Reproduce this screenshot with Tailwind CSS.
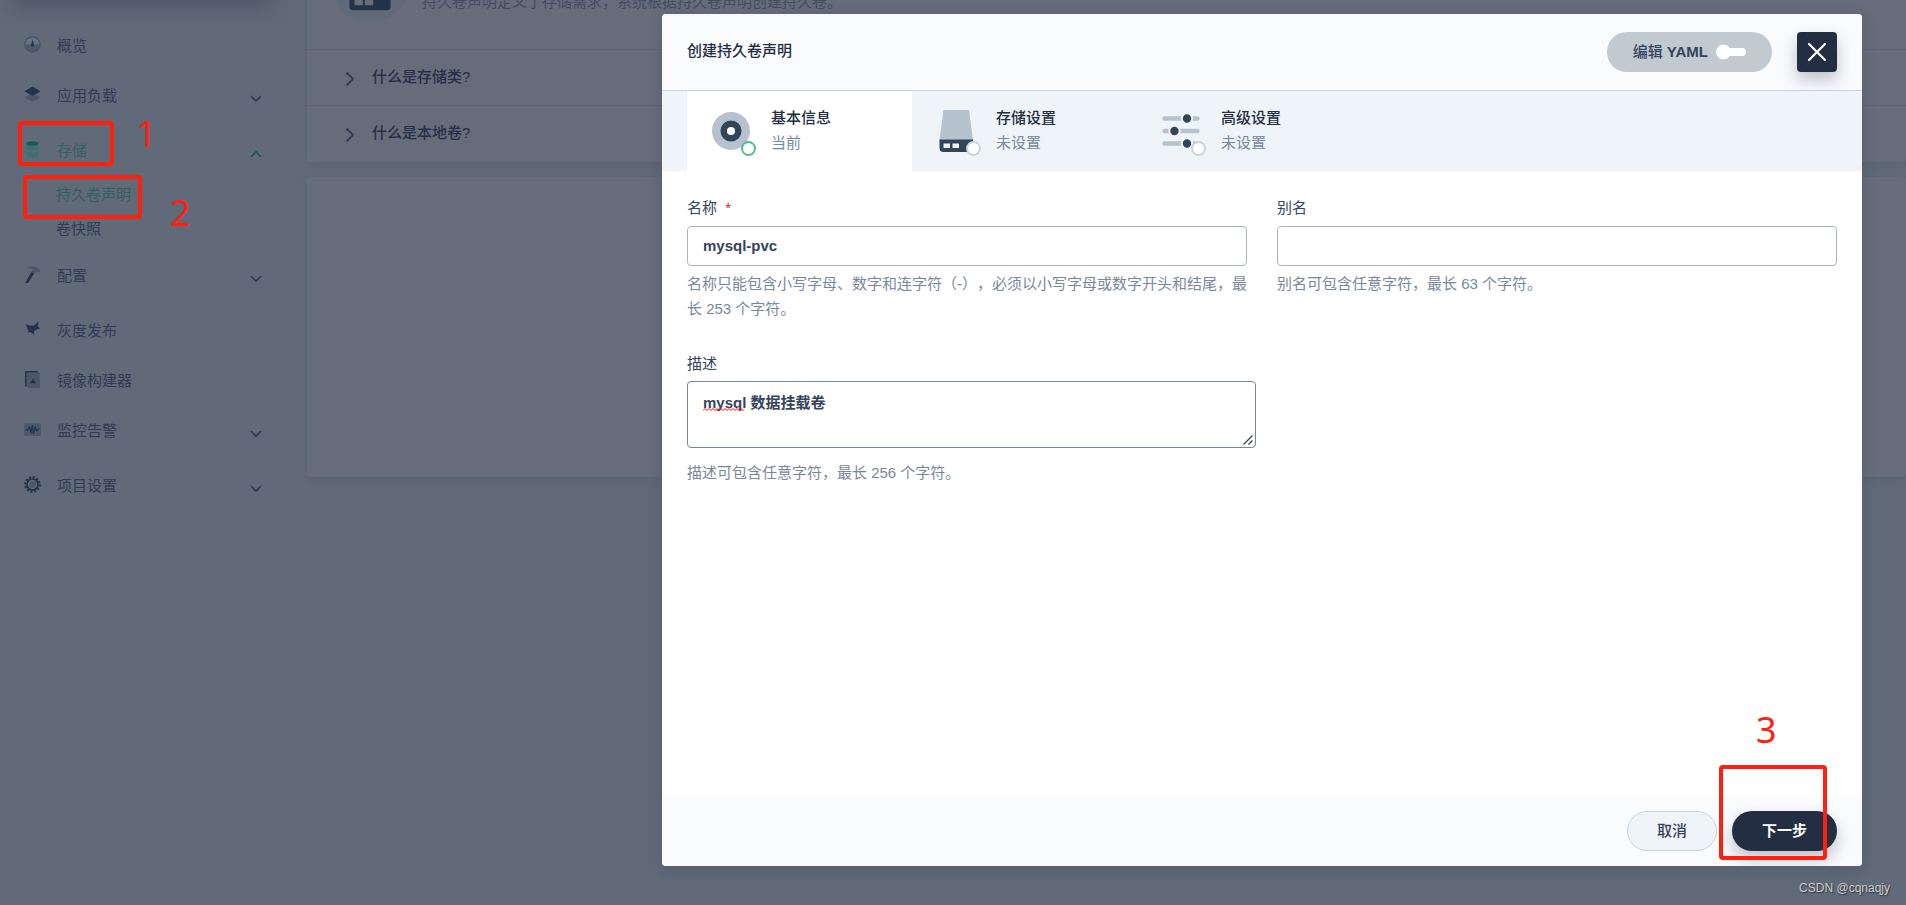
<!DOCTYPE html>
<html lang="zh-CN">
<head>
<meta charset="utf-8">
<title>创建持久卷声明</title>
<script src="https://cdn.jsdelivr.net/npm/@tailwindcss/browser@4"></script>
</head>
<body class="relative h-screen overflow-hidden bg-[#606a78] font-['Liberation_Sans','Noto_Sans_CJK_SC',sans-serif] text-[15px] leading-5 text-[#303c55] [text-spacing-trim:space-all]">

<svg class="hidden" aria-hidden="true">
  <symbol id="down" viewBox="0 0 12 8"><path d="M1 1l5 5.200 5-5.200" fill="none" stroke="currentColor" stroke-width="1.700"/></symbol>
  <symbol id="right" viewBox="0 0 10 16"><path d="M1.500 1.500L8 8l-6.500 6.500" fill="none" stroke="currentColor" stroke-width="1.800"/></symbol>
</svg>

<div class="flex h-full">
  <aside class="w-[307px] shrink-0">
    <div class="mx-3 -mt-10 mr-9 h-10 rounded bg-[#566071] shadow-[0_6px_20px_rgba(36,46,66,0.35)]"></div>
    <nav class="mr-[45px] ml-6 pt-[26px]" aria-label="项目导航">
      <ul class="flex flex-col gap-[10px]">
        <li><a href="#" class="flex h-10 items-start gap-4 pt-[10px]">
          <svg class="size-[17px]" viewBox="0 0 16 16"><circle cx="8" cy="8" r="7.300" fill="#4b596a" stroke="#465466"/><path d="M1.500 8a6.500 6.500 0 0113 0z" fill="#647382"/><path d="M8 3l1.300 5a1.400 1.400 0 11-2.600 0z" fill="#25334a"/></svg>
          概览</a></li>
        <li><a href="#" class="flex h-[45px] items-start gap-4 pt-[10px]">
          <svg class="size-[17px]" viewBox="0 0 16 16"><path d="M8 6.500l7.500 4L8 15 .5 10.500z" fill="#4a5869"/><path d="M8 .5l7.500 4.500L8 9.500.5 5z" fill="#25334a"/></svg>
          <span class="flex-1">应用负载</span><svg class="mt-[9px] h-2 w-3"><use href="#down"/></svg></a></li>
        <li class="text-[#34605f]"><a href="#" class="flex h-[45px] items-start gap-4 pt-[10px]">
          <svg class="size-[17px]" viewBox="0 0 16 16"><path d="M2 2.500h12v5c0 2-12 2-12 0z" fill="#417071"/><path d="M2 9.500c2 1.800 10 1.800 12 0v4.500c0 2.300-12 2.300-12 0z" fill="#417071"/><ellipse cx="8" cy="2.300" rx="6" ry="2" fill="#155b55"/></svg>
          <span class="flex-1">存储</span><svg class="mt-[9px] h-2 w-3 rotate-180 text-[#155b55]"><use href="#down"/></svg></a>
          <ul class="ml-8 pt-[2px]">
            <li><a href="#" class="flex h-[34px] items-center text-[#34605f]">持久卷声明</a></li>
            <li><a href="#" class="flex h-[34px] items-center text-[#303c55]">卷快照</a></li>
          </ul></li>
        <li><a href="#" class="flex h-[45px] items-start gap-4 pt-[10px]">
          <svg class="size-[17px]" viewBox="0 0 16 16"><path d="M7.200 5.500l2.300 1.300L4 16H1z" fill="#25334a"/><path d="M2 2C6-.5 10-.3 12.500 1.500l3 2.500-.7 2-3-.5L9.500 7 7 5.500 8 3C6 2 4 2 2 2z" fill="#4a5869"/></svg>
          <span class="flex-1">配置</span><svg class="mt-[9px] h-2 w-3"><use href="#down"/></svg></a></li>
        <li><a href="#" class="flex h-10 items-start gap-4 pt-[10px]">
          <svg class="size-[17px]" viewBox="0 0 16 16"><path d="M1.500 3l5 1.500c1.200-.3 1.800.3 2.500 0l5-4.300-1 4.600c.3 1 .5 1.300 2.200 2.200l-3.700 1.200-2 1.300.3 3.800-3.300-2.800L3.500 10.500l1-1.800L2.500 7.500l1-.5z" fill="#25334a"/></svg>
          灰度发布</a></li>
        <li><a href="#" class="flex h-10 items-start gap-4 pt-[10px]">
          <svg class="size-[17px]" viewBox="0 0 16 16"><path d="M2.500 1.500H15V16H4.500l-2-2z" fill="#4a5869"/><path d="M1.700 14.500V.8H13" fill="none" stroke="#25334a" stroke-width="1.400"/><path d="M8.500 7l3 4.500h-6z" fill="#25334a"/></svg>
          镜像构建器</a></li>
        <li><a href="#" class="flex h-[45px] items-start gap-4 pt-[10px]">
          <svg class="size-[17px]" viewBox="0 0 16 16"><rect y="2" width="16" height="12" rx="1" fill="#4a5869"/><path d="M1.500 8.500h2L5 6l1.500 4.500L8 4l.8 8 1.700-6 1.500 3.500 1.500-2h1" fill="none" stroke="#25334a" stroke-width="1.200"/></svg>
          <span class="flex-1">监控告警</span><svg class="mt-[9px] h-2 w-3"><use href="#down"/></svg></a></li>
        <li><a href="#" class="flex h-[45px] items-start gap-4 pt-[10px]">
          <svg class="size-[17px]" viewBox="0 0 16 16"><circle cx="8" cy="8" r="6.700" fill="none" stroke="#25334a" stroke-width="2.200" stroke-dasharray="1.900 1.608"/><circle cx="8" cy="8" r="5.200" fill="none" stroke="#25334a" stroke-width="1.600"/><circle cx="8" cy="8" r="3" fill="#4a5869"/></svg>
          <span class="flex-1">项目设置</span><svg class="mt-[9px] h-2 w-3"><use href="#down"/></svg></a></li>
      </ul>
    </nav>
  </aside>

  <main class="-mt-[78px] flex-1">
    <section class="rounded bg-[#676c7a] shadow-[0_4px_8px_rgba(36,46,66,0.08)]">
      <div class="flex h-[127px] gap-3 px-[23px] pt-5">
        <div class="flex size-20 items-center justify-center rounded-full bg-[#606a78]">
          <svg class="size-[72px]" viewBox="0 0 56 56"><path d="M15 4h26l3 32H12z" fill="#4a5869"/><path d="M12 32h32v15a3 3 0 01-3 3H15a3 3 0 01-3-3z" fill="#25334a"/><path d="M16 38h6.500v8H16zM24 38h6.500v8H24z" fill="#676c7a"/></svg>
        </div>
        <p class="pt-[50px] text-[#434d62]">持久卷声明定义了存储需求，系统根据持久卷声明创建持久卷。</p>
      </div>
      <div class="flex h-14 items-start gap-[17px] border-t border-[#5c6775] px-[38px] pt-[17px] font-medium text-[#252f45]"><svg class="mt-1 h-4 w-[10px] text-[#303c52]"><use href="#right"/></svg>什么是存储类?</div>
      <div class="flex h-[57px] items-start gap-[17px] border-t border-[#5c6775] px-[38px] pt-[17px] font-medium text-[#252f45]"><svg class="mt-1 h-4 w-[10px] text-[#303c52]"><use href="#right"/></svg>什么是本地卷?</div>
    </section>
    <section class="mt-[15px] h-[300px] rounded bg-[#676c7a] shadow-[0_4px_8px_rgba(36,46,66,0.08)]"></section>
  </main>
</div>

<!-- Dialog over the page -->
<div class="absolute inset-0 flex justify-end pt-[14px] pr-11 pb-[39px]">
  <form role="dialog" aria-labelledby="dlg-title" class="flex w-[1200px] max-w-full flex-col overflow-hidden rounded bg-white shadow-[0_4px_16px_rgba(36,46,66,0.2)]">
    <header class="flex h-[77px] shrink-0 items-center border-b border-[#ccd3db] bg-[#f9fbfd] px-[25px]">
      <h1 id="dlg-title" class="flex-1 pb-[2px] font-medium text-[#242e42]">创建持久卷声明</h1>
      <button type="button" class="flex h-10 items-center gap-2 rounded-full bg-[#c1c9d1] px-[26px] font-bold text-[#36435c]">
        <span><span class="font-medium">编辑</span> YAML</span>
        <svg class="h-4 w-[30px]" viewBox="0 0 30 16"><rect x="6" y="4" width="24" height="8" rx="4" fill="#fff"/><circle cx="7.500" cy="8" r="7.500" fill="#fff"/></svg>
      </button>
      <button type="button" aria-label="关闭" class="ml-[25px] flex size-10 items-center justify-center rounded bg-[#242e42] shadow-[0_8px_16px_rgba(36,46,66,0.28)]">
        <svg class="size-5" viewBox="0 0 20 20"><path d="M2 2l16 16M18 2L2 18" stroke="#fff" stroke-width="2.200" stroke-linecap="round"/></svg>
      </button>
    </header>

    <ol class="flex h-20 shrink-0 bg-[#eff4f9] px-[25px]">
      <li class="flex w-[225px] items-start gap-4 bg-white px-5 pt-4">
        <span class="relative size-12"><svg class="size-12" viewBox="0 0 48 48"><circle cx="24" cy="24" r="19" fill="#b6c2cd"/><circle cx="24" cy="24" r="7.300" fill="#fff" stroke="#324558" stroke-width="6.500"/></svg>
          <span class="absolute -right-px -bottom-px size-[15px] rounded-full border-2 border-[#55bc8a] bg-white"></span></span>
        <span class="flex flex-col gap-[5px] pt-px"><b class="font-medium text-[#242e42]">基本信息</b><span class="text-[#79879c]">当前</span></span>
      </li>
      <li class="flex w-[225px] items-start gap-4 px-5 pt-4">
        <span class="relative size-12"><svg class="size-12" viewBox="0 0 48 48"><path d="M11.500 3h25.500l4 30H7.500z" fill="#b6c2cd"/><path d="M7.500 32.500H41V41a4 4 0 01-4 4H11.500a4 4 0 01-4-4z" fill="#324558"/><path d="M11.500 36.500h6.500V41h-6.500zM20.500 36.500H27V41h-6.500z" fill="#eff4f9"/></svg>
          <span class="absolute -right-px -bottom-px size-[15px] rounded-full border-2 border-[#ccd3db] bg-white"></span></span>
        <span class="flex flex-col gap-[5px] pt-px"><b class="font-medium text-[#242e42]">存储设置</b><span class="text-[#79879c]">未设置</span></span>
      </li>
      <li class="flex w-[225px] items-start gap-4 px-5 pt-4">
        <span class="relative size-12"><svg class="size-12" viewBox="0 0 48 48"><path d="M7.500 11.500h33M7.500 24h33M7.500 36.500h33" stroke="#b6c2cd" stroke-width="4.400" stroke-linecap="round"/><g fill="#324558" stroke="#eff4f9" stroke-width="2"><circle cx="30" cy="11.500" r="5.200"/><circle cx="17.500" cy="24" r="5.200"/><circle cx="30" cy="36.500" r="5.200"/></g></svg>
          <span class="absolute -right-px -bottom-px size-[15px] rounded-full border-2 border-[#ccd3db] bg-white"></span></span>
        <span class="flex flex-col gap-[5px] pt-px"><b class="font-medium text-[#242e42]">高级设置</b><span class="text-[#79879c]">未设置</span></span>
      </li>
    </ol>

    <div class="grid flex-1 grid-cols-2 content-start gap-x-[30px] gap-y-[33px] px-[25px] pt-[27px]">
      <div class="flex flex-col">
        <label for="name" class="text-[#36435c]">名称 <span class="ml-1 text-[#ca2621]">*</span></label>
        <input id="name" value="mysql-pvc" class="mt-2 h-10 rounded border border-[#abb4be] px-[15px] pb-[2px] font-bold text-[#36435c] outline-none">
        <p class="mt-[5px] leading-[25px] text-[#79879c]">名称只能包含小写字母、数字和连字符（-），必须以小写字母或数字开头和结尾，最长 253 个字符。</p>
      </div>
      <div class="flex flex-col">
        <label for="alias" class="text-[#36435c]">别名</label>
        <input id="alias" class="mt-2 h-10 rounded border border-[#abb4be] px-[15px] font-bold text-[#36435c] outline-none">
        <p class="mt-[5px] leading-[25px] text-[#79879c]">别名可包含任意字符，最长 63 个字符。</p>
      </div>
      <div class="flex flex-col">
        <label for="desc" class="text-[#36435c]">描述</label>
        <div class="relative mt-[7px] -mr-[9px] flex">
          <textarea id="desc" spellcheck="false" class="h-[67px] flex-1 resize-none rounded border border-[#79879c] px-[15px] py-[11px] font-bold text-[#36435c] outline-none">mysql 数据挂载卷</textarea>
          <svg class="absolute top-[27px] left-4 h-[3px] w-[43px]" viewBox="0 0 43 3"><path d="M0 2.500l2-2 2 2 2-2 2 2 2-2 2 2 2-2 2 2 2-2 2 2 2-2 2 2 2-2 2 2 2-2 2 2 2-2 2 2 2-2 2 2 1-1" fill="none" stroke="#f00"/></svg>
          <svg class="absolute right-[3px] bottom-[3px] size-[10px]" viewBox="0 0 10 10"><path d="M.5 9.500l9-9M5.500 9.500l4-4" stroke="#444" stroke-width="1.300"/></svg>
        </div>
        <p class="mt-3 leading-[25px] text-[#79879c]">描述可包含任意字符，最长 256 个字符。</p>
      </div>
    </div>

    <footer class="flex h-[70px] shrink-0 items-center justify-end gap-[15px] bg-[#f9fbfd] px-[25px]">
      <button type="button" class="h-10 w-[90px] rounded-full border border-[#ccd3db] bg-[#eff4f9] font-medium text-[#36435c]">取消</button>
      <button type="submit" class="h-10 w-[105px] rounded-full bg-[#242e42] font-bold text-white shadow-[0_8px_16px_rgba(36,46,66,0.28)]">下一步</button>
    </footer>
  </form>
</div>

<!-- Annotations drawn on top -->
<div class="pointer-events-none absolute inset-0 font-['Noto_Sans',sans-serif] text-4xl text-[#ff2010]">
  <div class="absolute top-[121px] left-[18px] h-[45px] w-[96px] rounded border-4 border-[#ff2010]"></div>
  <div class="absolute top-[175px] left-[23px] h-[44px] w-[119px] rounded border-4 border-[#ff2010]"></div>
  <div class="absolute top-[765px] left-[1719px] h-[95px] w-[108px] rounded border-4 border-[#ff2010]"></div>
  <span class="absolute top-[114px] left-[136px]">1</span>
  <span class="absolute top-[193px] left-[170px]">2</span>
  <span class="absolute top-[710px] left-[1756px]">3</span>
  <span class="absolute right-4 bottom-[8px] font-['Liberation_Sans',sans-serif] text-[12px] leading-[18px] text-[#c8ccd2] [text-shadow:1px_1px_1px_#333]">CSDN @cqnaqjy</span>
</div>
</body>
</html>
